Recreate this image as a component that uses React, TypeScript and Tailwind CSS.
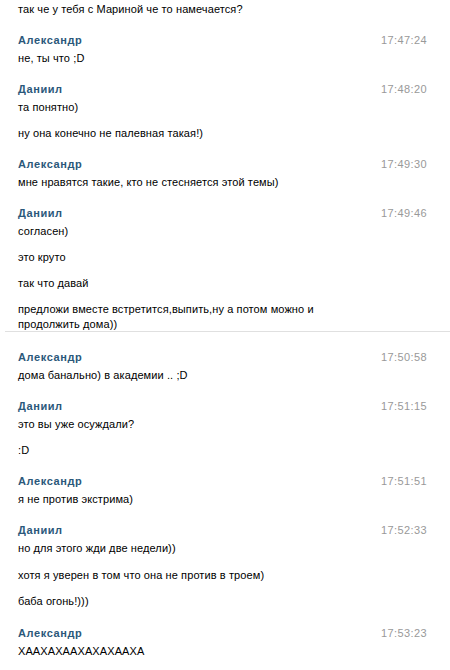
import React from "react";

type Block = { name?: string; time?: string; msgs: string[]; divider?: boolean; extraTop?: number };

const blocks: Block[] = [
  { msgs: ["так че у тебя с Мариной че то намечается?"] },
  { name: "Александр", time: "17:47:24", msgs: ["не, ты что ;D"] },
  { name: "Даниил", time: "17:48:20", msgs: ["та понятно)", "ну она конечно не палевная такая!)"] },
  { name: "Александр", time: "17:49:30", msgs: ["мне нравятся такие, кто не стесняется этой темы)"] },
  {
    name: "Даниил",
    time: "17:49:46",
    msgs: [
      "согласен)",
      "это круто",
      "так что давай",
      "предложи вместе встретится,выпить,ну а потом можно и продолжить дома))",
    ],
    divider: true,
  },
  { name: "Александр", time: "17:50:58", msgs: ["дома банально) в академии .. ;D"], extraTop: 1 },
  { name: "Даниил", time: "17:51:15", msgs: ["это вы уже осуждали?", ":D"] },
  { name: "Александр", time: "17:51:51", msgs: ["я не против экстрима)"] },
  {
    name: "Даниил",
    time: "17:52:33",
    msgs: ["но для этого жди две недели))", "хотя я уверен в том что она не против в троем)", "баба огонь!)))"],
  },
  { name: "Александр", time: "17:53:23", msgs: ["ХААХАХААХАХАХААХА"], extraTop: 2 },
];

export default function App() {
  return (
    <div
      className="w-[450px] h-[670px] overflow-hidden bg-white text-[11px] leading-[15px] text-black pt-[2px]"
      style={{ fontFamily: '"Liberation Sans", Arial, sans-serif' }}
    >
      {blocks.map((b, i) => (
        <div
          key={i}
          className={
            i === 0 ? "" : b.extraTop === 2 ? "mt-[17px]" : b.extraTop === 1 ? "mt-[18px]" : "mt-[16px]"
          }
        >
          {b.name && (
            <div className="flex justify-between pl-[18px] pr-[23px] h-[15px]">
              <span className="font-bold text-[#2b587a] tracking-[0.6px]">{b.name}</span>
              <span className="text-[#999999] tracking-[0.4px]">{b.time}</span>
            </div>
          )}
          <div className="pl-[18px] pr-[130px] tracking-[0.1px]">
            {b.msgs.map((m, j) => (
              <div
                key={j}
                className={
                  b.name
                    ? j === 0
                      ? "mt-[3px]"
                      : i === 8 && j === 1
                      ? "mt-[12px]"
                      : "mt-[11px]"
                    : j === 0
                    ? ""
                    : "mt-[11px]"
                }
              >
                {m}
              </div>
            ))}
          </div>
          {b.divider && <div className="h-px bg-[#e0e0e0] ml-[5px] mt-[-1px]" />}
        </div>
      ))}
    </div>
  );
}
